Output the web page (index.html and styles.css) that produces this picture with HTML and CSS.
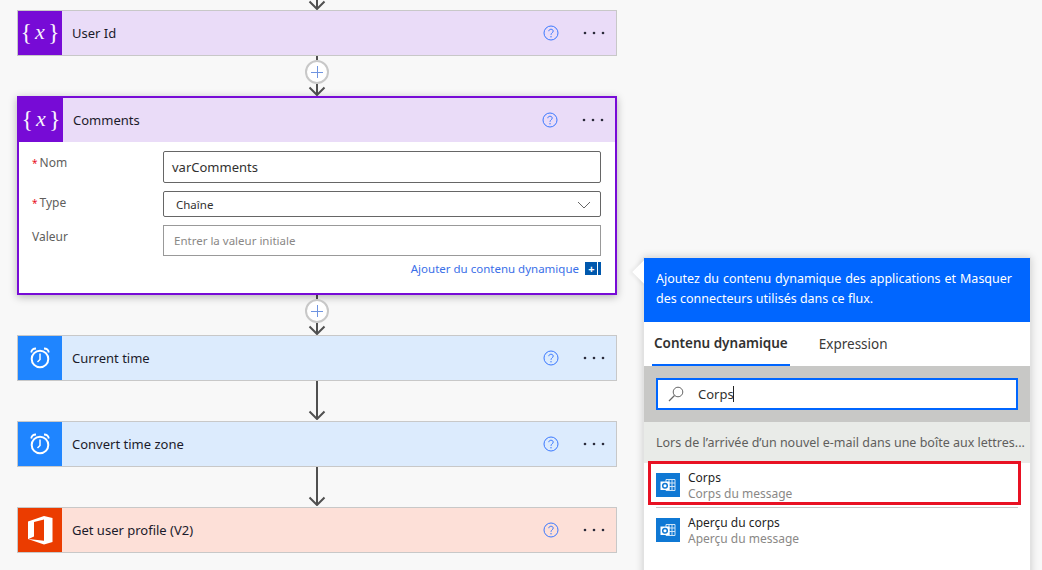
FILE: index.html
```html
<!DOCTYPE html>
<html lang="fr">
<head>
<meta charset="utf-8">
<title>Flux</title>
<link rel="stylesheet" href="styles.css">
</head>
<body>
<svg class="defs" width="0" height="0" aria-hidden="true">
  <symbol id="arrow" viewBox="0 0 24 12"><path d="M12 0V11M4.500 3.500L12 11L19.500 3.500" fill="none" stroke="#505050" stroke-width="2"/></symbol>
  <symbol id="var" viewBox="0 0 44 44">
    <text x="22" y="28.500" text-anchor="middle" class="var-text">{</text>
  </symbol>
  <symbol id="clock" viewBox="0 0 44 44">
    <g fill="none" stroke="#fff">
      <circle cx="22" cy="23" r="8.300" stroke-width="2"/>
      <path d="M22 17.500V23.500L19.500 26" stroke-width="1.500"/>
      <path d="M13.200 16.500Q13.800 12.500 18 12.500M30.800 16.500Q30.200 12.500 26 12.500" stroke-width="1.800"/>
    </g>
  </symbol>
  <symbol id="office" viewBox="0 0 44 44">
    <path fill="#fff" fill-rule="evenodd" d="M10 13.500L26 8L34.500 10V34L26 36.500L10 31ZM26 11.500L16 14V28.500L10.500 31L26 32.800Z"/>
  </symbol>
  <symbol id="outlook" viewBox="0 0 24 24">
    <rect width="24" height="24" fill="#0f78d4"/>
    <path d="M10 6.500H19V17.500H10Z" fill="none" stroke="#cfe4f7" stroke-width="1"/>
    <path d="M13 6.500V17.500M16 6.500V17.500M10 10H19M10 13.500H19" stroke="#cfe4f7" stroke-width="1"/>
    <rect x="4.500" y="8.500" width="9" height="8.500" fill="#fff"/>
    <circle cx="9" cy="12.700" r="2.300" fill="none" stroke="#0f78d4" stroke-width="1.500"/>
  </symbol>
  <symbol id="help" viewBox="0 0 16 16">
    <circle cx="8" cy="8" r="7" fill="none" stroke="#3a78ff" stroke-width="1"/>
    <path d="M5.800 6.200C5.800 3.600 10.200 3.600 10.200 6.100C10.200 7.800 8 7.800 8 9.800" fill="none" stroke="#3a78ff" stroke-width="1"/>
    <circle cx="8" cy="11.800" r=".7" fill="#3a78ff"/>
  </symbol>
  <symbol id="dots" viewBox="0 0 22 4">
    <circle cx="2" cy="2" r="1.300" fill="#2b2b3a"/><circle cx="11" cy="2" r="1.300" fill="#2b2b3a"/><circle cx="20" cy="2" r="1.300" fill="#2b2b3a"/>
  </symbol>
</svg>

<main class="flow">
  <div class="link link-top"><svg class="arrow"><use href="#arrow"/></svg></div>

  <section class="card card-var">
    <header class="card-head">
      <span class="card-icon icon-var"><span class="vx"><span>{</span><i>x</i><span>}</span></span></span>
      <h2 class="card-title">User Id</h2>
      <svg class="help"><use href="#help"/></svg>
      <svg class="dots"><use href="#dots"/></svg>
    </header>
  </section>

  <div class="link">
    <span class="stub"></span>
    <span class="plus"></span>
    <svg class="arrow"><use href="#arrow"/></svg>
  </div>

  <section class="card card-var card-open">
    <header class="card-head">
      <span class="card-icon icon-var"><span class="vx"><span>{</span><i>x</i><span>}</span></span></span>
      <h2 class="card-title">Comments</h2>
      <svg class="help"><use href="#help"/></svg>
      <svg class="dots"><use href="#dots"/></svg>
    </header>
    <div class="form">
      <div class="row row-name">
        <label class="field-label"><b>*</b>Nom</label>
        <div class="input input-name">varComments</div>
      </div>
      <div class="row row-type">
        <label class="field-label"><b>*</b>Type</label>
        <div class="input input-type">Chaîne
          <svg class="chev" viewBox="0 0 14 8"><path d="M1 1L7 7L13 1" fill="none" stroke="#666" stroke-width="1"/></svg>
        </div>
      </div>
      <div class="row row-value">
        <label class="field-label">Valeur</label>
        <div class="input input-value">Entrer la valeur initiale</div>
      </div>
      <div class="dyn">
        <span class="dyn-text">Ajouter du contenu dynamique</span>
        <span class="dyn-btn"><span class="dyn-plus">+</span></span>
      </div>
    </div>
  </section>

  <div class="link">
    <span class="stub"></span>
    <span class="plus"></span>
    <svg class="arrow"><use href="#arrow"/></svg>
  </div>

  <section class="card card-time">
    <header class="card-head">
      <span class="card-icon icon-time"><svg class="card-svg"><use href="#clock"/></svg></span>
      <h2 class="card-title">Current time</h2>
      <svg class="help"><use href="#help"/></svg>
      <svg class="dots"><use href="#dots"/></svg>
    </header>
  </section>

  <div class="link link-plain"><span class="line"></span><svg class="arrow"><use href="#arrow"/></svg></div>

  <section class="card card-time">
    <header class="card-head">
      <span class="card-icon icon-time"><svg class="card-svg"><use href="#clock"/></svg></span>
      <h2 class="card-title">Convert time zone</h2>
      <svg class="help"><use href="#help"/></svg>
      <svg class="dots"><use href="#dots"/></svg>
    </header>
  </section>

  <div class="link link-plain"><span class="line"></span><svg class="arrow"><use href="#arrow"/></svg></div>

  <section class="card card-office">
    <header class="card-head">
      <span class="card-icon icon-office"><svg class="card-svg"><use href="#office"/></svg></span>
      <h2 class="card-title">Get user profile (V2)</h2>
      <svg class="help"><use href="#help"/></svg>
      <svg class="dots"><use href="#dots"/></svg>
    </header>
  </section>
</main>

<aside class="panel">
  <span class="caret"></span>
  <div class="panel-head">
    <p class="panel-desc">Ajoutez du contenu dynamique des applications et des connecteurs utilisés dans ce flux.</p>
    <span class="panel-hide">Masquer</span>
  </div>
  <nav class="tabs">
    <span class="tab tab-on">Contenu dynamique</span>
    <span class="tab">Expression</span>
  </nav>
  <div class="search">
    <div class="search-box">
      <svg class="mag" viewBox="0 0 16 16"><circle cx="10" cy="6" r="4.800" fill="none" stroke="#666" stroke-width="1"/><path d="M6.500 9.500L1 15" stroke="#666" stroke-width="1.200"/></svg>
      <span class="search-text">Corps</span><span class="cursor"></span>
    </div>
  </div>
  <div class="group">Lors de l’arrivée d’un nouvel e-mail dans une boîte aux lettres...</div>
  <ul class="items">
    <li class="item">
      <svg class="item-icon"><use href="#outlook"/></svg>
      <div class="item-text"><div class="item-title">Corps</div><div class="item-sub">Corps du message</div></div>
    </li>
    <li class="item">
      <svg class="item-icon"><use href="#outlook"/></svg>
      <div class="item-text"><div class="item-title">Aperçu du corps</div><div class="item-sub">Aperçu du message</div></div>
    </li>
  </ul>
  <span class="highlight"></span>
</aside>
</body>
</html>
```

FILE: styles.css
```css
* { box-sizing: border-box; }
html, body { margin: 0; height: 570px; overflow: hidden; }
body {
  background: #f8f8f8;
  color: #1f1f1f;
  font-family: "Noto Sans", "Open Sans", sans-serif;
  font-size: 13px;
  position: relative;
}
.defs { position: absolute; }

.flow { width: 600px; margin-left: 17px; display: flex; flex-direction: column; }

.link { height: 40px; display: flex; flex-direction: column; align-items: center; flex: none; }
.link-top { height: 10px; justify-content: flex-end; }
.arrow { width: 24px; height: 12px; display: block; flex: none; }
.stub { width: 2px; height: 4px; background: #505050; flex: none; }
.plus {
  width: 24px; height: 24px; border-radius: 50%; flex: none;
  border: 2px solid #c8c8c8; background: #fff; position: relative;
}
.plus::before, .plus::after { content: ""; position: absolute; background: #6f94e0; }
.plus::before { left: 4px; right: 4px; top: 9.500px; height: 1px; }
.plus::after { top: 4px; bottom: 4px; left: 9.500px; width: 1px; }
.link-plain .line { width: 2px; height: 28px; background: #505050; flex: none; margin-bottom: -1px; }

.card { border: 1px solid #c8c8c8; flex: none; }
.card-var .card-head { background: #eadcf8; }
.card-time .card-head { background: #dcebfd; }
.card-office .card-head { background: #fde0d8; }
.card-open { border: 2px solid #770bd6; background: #fff; box-shadow: 0 2px 8px rgba(0,0,0,.28); height: 199px; margin-bottom: 0; position: relative; }
.card-head { height: 44px; display: flex; align-items: center; padding-right: 11px; }
.card-icon { width: 44px; height: 44px; display: flex; align-items: center; justify-content: center; flex: none; }
.icon-var { background: #770bd6; }
.icon-time { background: #1f85ff; }
.icon-office { background: #eb3c00; }
.card-svg { width: 44px; height: 44px; display: block; }
.vx { color: #fff; font-family: "Liberation Serif", serif; font-size: 24px; line-height: 1; display: flex; align-items: center; gap: 3px; margin-top: -2px; font-weight: 400; opacity: .95; }
.vx i { font-size: 22px; }
.card-title { font-size: 13px; font-weight: 400; margin: 0 0 0 10px; flex: 1; color: #1b1b2b; }
.help { width: 16px; height: 16px; flex: none; }
.dots { width: 22px; height: 4px; margin-left: 24px; flex: none; }

.form { position: relative; height: 151px; padding: 9px 13px 0 13px; }
.row { display: grid; grid-template-columns: 131px 438px; }
.row-name { height: 40px; }
.row-type { height: 34px; }
.row-value { height: 31px; }
.field-label { font-size: 12px; color: #605e5c; padding-top: 3px; }
.field-label b { color: #e81123; font-weight: 400; font-size: 10px; margin-right: 2px; }
.row-type .field-label { padding-top: 3px; }
.input { border: 1px solid #666; border-radius: 2px; background: #fff; display: flex; align-items: center; position: relative; }
.input-name { height: 32px; padding-left: 8px; font-size: 13px; color: #323130; }
.input-type { height: 26px; padding-left: 12px; font-size: 11.500px; color: #323130; }
.input-value { height: 31px; padding-left: 10px; font-size: 11.500px; color: #8a8886; border-color: #999; border-radius: 0; }
.chev { position: absolute; right: 9px; top: 9px; width: 14px; height: 8px; }
.dyn { display: flex; justify-content: flex-end; align-items: center; gap: 6px; height: 14px; margin-top: 5px; margin-right: 0; width: 569px; }
.dyn-text { color: #3a6fe8; font-size: 11.500px; }
.dyn-btn { width: 16px; height: 13px; background: #0058ad; border-right: 3px solid #0058ad; display: flex; align-items: center; justify-content: center; position: relative; }
.dyn-btn::after { content: ""; position: absolute; right: 0; top: 0; bottom: 0; width: 1px; background: #fff; }
.dyn-plus { color: #fff; font-size: 11px; font-weight: 700; line-height: 1; }

.panel {
  position: absolute; left: 643px; top: 257px; width: 388px; height: 330px;
  background: #fff; border: 1px solid #e2e2e2;
  box-shadow: 0 0 8px rgba(0,0,0,.18);
}
.caret { position: absolute; left: -8px; top: 5px; width: 18px; height: 18px; background: #fff; transform: rotate(45deg); box-shadow: -2px 2px 4px rgba(0,0,0,.06); }
.panel-head { position: relative; height: 64px; background: #0066ff; color: #fff; padding: 11px 18px 0 12px; display: flex; justify-content: space-between; font-size: 12.500px; line-height: 20px; }
.panel-desc { margin: 0; width: 300px; text-align: justify; }
.panel-hide { font-size: 12.500px; }
.tabs { height: 44px; display: flex; gap: 27px; padding: 0 8px; }
.tab { padding: 0 2px; display: flex; align-items: center; font-size: 13.500px; color: #3b3a39; height: 44px; padding-top: 0; }
.tab-on { font-weight: 600; border-bottom: 2px solid #0066ff; color: #323130; }
.search { height: 56px; background: #c8c8c6; padding: 12px 12px; }
.search-box { height: 32px; background: #fff; border: 2px solid #0066ff; display: flex; align-items: center; padding-left: 10px; }
.mag { width: 16px; height: 16px; flex: none; }
.search-text { margin-left: 14px; font-size: 13px; color: #323130; }
.cursor { width: 1px; height: 16px; background: #222; margin-left: -1px; }
.group { height: 41px; background: #e9ebe8; color: #605e5c; display: flex; align-items: center; padding-left: 12px; font-size: 12.500px; white-space: nowrap; }
.items { list-style: none; margin: 0; padding: 0; }
.item { margin: 0 12px; height: 45px; display: flex; align-items: flex-start; padding-top: 10px; gap: 8px; border-bottom: 1px solid #c8c8c8; }
.item:last-child { border-bottom: 0; }
.item-icon { width: 24px; height: 24px; flex: none; }
.item-text { margin-top: -3px; }
.item-title { font-size: 12px; font-weight: 400; color: #1f1f1f; line-height: 16px; }
.item-sub { font-size: 12px; color: #8a8886; line-height: 16px; }
.highlight { position: absolute; left: 4px; top: 203px; width: 373px; height: 44px; border: 3px solid #e81123; }
```
